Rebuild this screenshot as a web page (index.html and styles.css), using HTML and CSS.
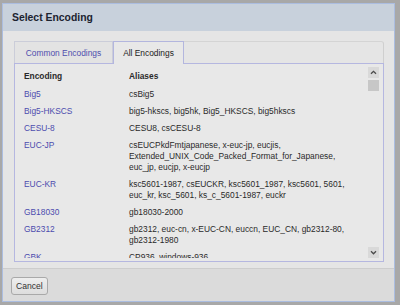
FILE: index.html
```
<!DOCTYPE html>
<html>
<head>
<meta charset="utf-8">
<link rel="stylesheet" href="styles.css">
</head>
<body>
<div class="window">
  <div class="titlebar">Select Encoding</div>
  <div class="content">
    <div class="tabs">
      <div class="tab">Common Encodings</div>
      <div class="tab active">All Encodings</div>
      <div class="filler"></div>
    </div>
    <div class="panel">
      <div class="list">
        <div class="row head"><div class="enc">Encoding</div><div class="aliases">Aliases</div></div>
        <div class="row"><div class="enc">Big5</div><div class="aliases">csBig5</div></div>
        <div class="row"><div class="enc">Big5-HKSCS</div><div class="aliases">big5-hkscs, big5hk, Big5_HKSCS, big5hkscs</div></div>
        <div class="row"><div class="enc">CESU-8</div><div class="aliases">CESU8, csCESU-8</div></div>
        <div class="row"><div class="enc">EUC-JP</div><div class="aliases">csEUCPkdFmtjapanese, x-euc-jp, eucjis,<br>Extended_UNIX_Code_Packed_Format_for_Japanese,<br>euc_jp, eucjp, x-eucjp</div></div>
        <div class="row"><div class="enc">EUC-KR</div><div class="aliases">ksc5601-1987, csEUCKR, ksc5601_1987, ksc5601, 5601,<br>euc_kr, ksc_5601, ks_c_5601-1987, euckr</div></div>
        <div class="row"><div class="enc">GB18030</div><div class="aliases">gb18030-2000</div></div>
        <div class="row"><div class="enc">GB2312</div><div class="aliases">gb2312, euc-cn, x-EUC-CN, euccn, EUC_CN, gb2312-80,<br>gb2312-1980</div></div>
        <div class="row"><div class="enc">GBK</div><div class="aliases">CP936, windows-936</div></div>
      </div>
      <div class="scrollbar">
        <div class="arrow up"><svg width="11" height="11" viewBox="0 0 11 11"><polyline points="3,6.8 5.5,4.3 8,6.8" fill="none" stroke="#4a4a4a" stroke-width="1.3"/></svg></div>
        <div class="thumb"></div>
        <div class="track"></div>
        <div class="arrow down"><svg width="11" height="11" viewBox="0 0 11 11"><polyline points="3,4.3 5.5,6.8 8,4.3" fill="none" stroke="#4a4a4a" stroke-width="1.3"/></svg></div>
      </div>
    </div>
  </div>
  <div class="footer">
    <button class="btn">Cancel</button>
  </div>
</div>
</body>
</html>
```
FILE: styles.css
```
html, body {
  margin: 0;
  padding: 0;
}
body {
  background: #a8a8a8;
  width: 400px;
  height: 305px;
  overflow: hidden;
  font-family: "Liberation Sans", Arial, sans-serif;
  font-size: 8.4px;
  color: #2a2a2a;
}
.window {
  margin: 3px 0 0 2px;
  width: 393px;
  height: 299px;
  box-sizing: border-box;
  border: 1px solid #abbde0;
  background: #e5e5e5;
  display: flex;
  flex-direction: column;
}
.titlebar {
  height: 27px;
  flex: none;
  background: #c8d1dc;
  display: flex;
  align-items: center;
  padding-left: 9px;
  font-weight: bold;
  font-size: 10.4px;
  color: #1c2330;
}
.content {
  height: 237px;
  flex: none;
  box-sizing: border-box;
  padding: 10px 10px 6px 11px;
  display: flex;
  flex-direction: column;
}
.tabs {
  display: flex;
  align-items: flex-start;
  height: 23px;
  box-sizing: border-box;
  border-bottom: 1px solid #b5b7e0;
  flex: none;
}
.tab {
  height: 22px;
  box-sizing: border-box;
  border: 1px solid #cbcdd9;
  border-bottom: none;
  display: flex;
  align-items: center;
  justify-content: center;
  color: #4f4fae;
  background: #e3e3e3;
}
.tab:first-child {
  width: 99px;
}
.tab.active {
  width: 71px;
  height: 23px;
  margin-bottom: -1px;
  border-color: #b3b6de;
  background: #e8e8e8;
  color: #222;
  padding-bottom: 1px;
}
.filler {
  flex: 1;
  height: 22px;
  box-sizing: border-box;
  border-top: 1px solid #d4d4d4;
  border-right: 1px solid #cfcfcf;
  border-radius: 0 3px 0 0;
}
.panel {
  flex: 1;
  display: flex;
  border: 1px solid #b5b7e0;
  border-top: none;
  background: #e8e8e8;
  padding: 0 4px 3px 9px;
  min-height: 0;
}
.list {
  flex: 1;
  overflow: hidden;
  padding-top: 3px;
}
.row {
  display: flex;
  padding: 3px 0;
  line-height: 11px;
}
.row.head {
  height: 19px;
  box-sizing: border-box;
  padding: 4px 0;
  font-weight: bold;
  color: #2a2a2a;
}
.enc {
  width: 105px;
  flex: none;
  color: #4c4cae;
}
.head .enc {
  color: #2a2a2a;
}
.aliases {
  white-space: nowrap;
}
.scrollbar {
  width: 11px;
  flex: none;
  display: flex;
  flex-direction: column;
  margin: 3px 0 0 0;
}
.arrow {
  width: 11px;
  height: 11px;
  flex: none;
  background: #d9d9d9;
}
.arrow svg {
  display: block;
}
.thumb {
  height: 11px;
  margin-top: 2px;
  background: #c7c7c7;
  flex: none;
}
.track {
  flex: 1;
}
.footer {
  height: 33px;
  flex: none;
  box-sizing: border-box;
  border-top: 1px solid #cdcdcd;
  background: #dbdbdb;
  display: flex;
  align-items: center;
  padding-left: 8px;
}
.btn {
  height: 18px;
  padding: 0 4px;
  margin-top: 2px;
  border: 1px solid #a9a9a9;
  border-radius: 3px;
  background: linear-gradient(#eeeeee, #dddddd);
  font-family: "Liberation Sans", Arial, sans-serif;
  font-size: 8.6px;
  color: #333;
}
```
